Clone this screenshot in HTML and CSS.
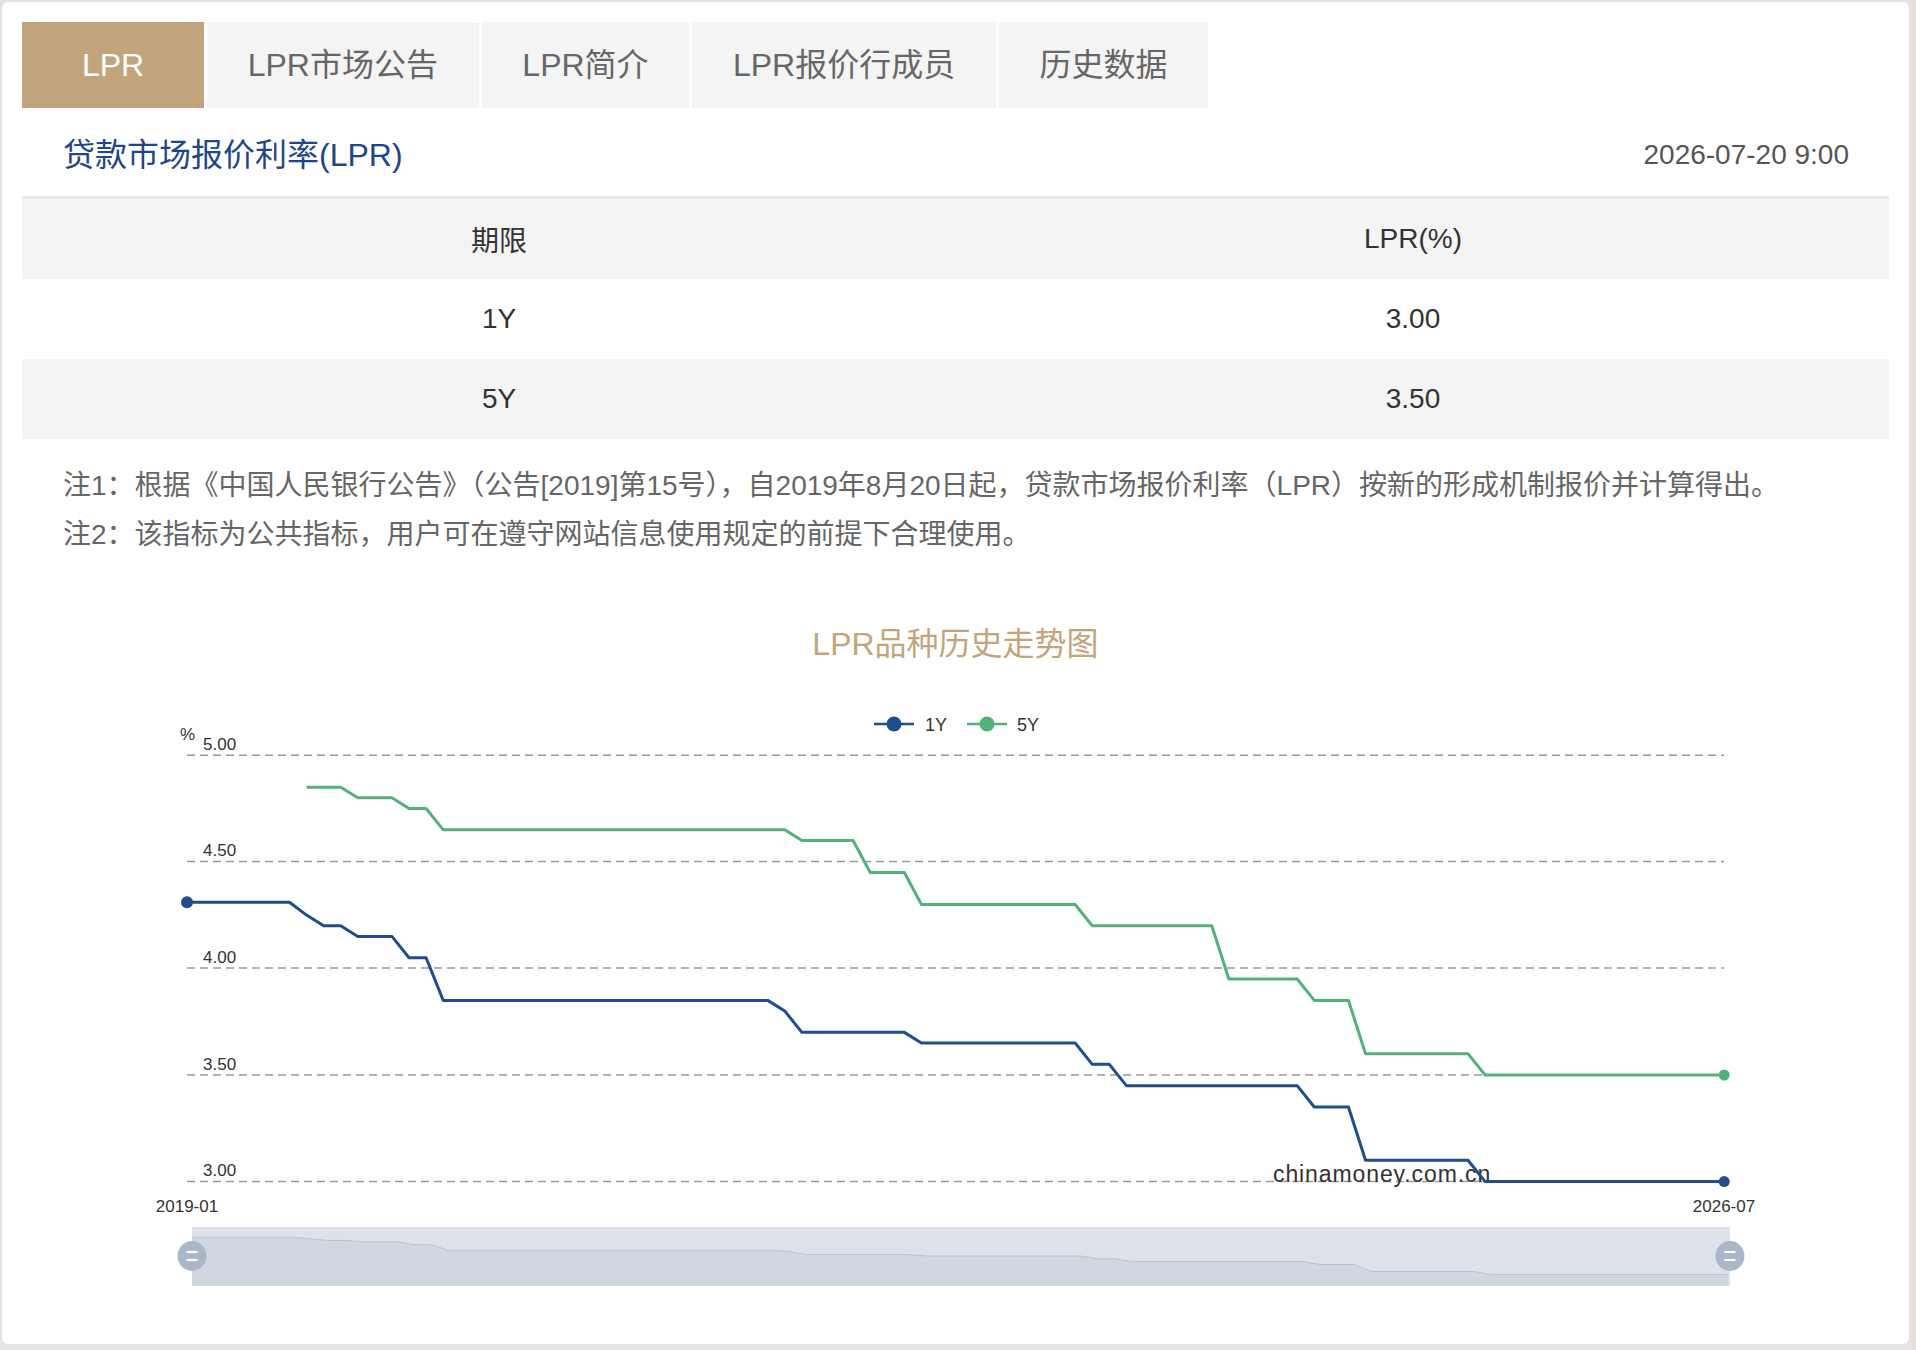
FILE: index.html
```html
<!DOCTYPE html>
<html lang="zh-CN">
<head>
<meta charset="utf-8">
<title>LPR</title>
<link rel="stylesheet" href="styles.css">
</head>
<body>
<div class="card">
  <div class="tabs">
    <div class="tab tab-active tab-first">LPR</div>
    <div class="tab">LPR市场公告</div>
    <div class="tab">LPR简介</div>
    <div class="tab">LPR报价行成员</div>
    <div class="tab">历史数据</div>
  </div>
  <div class="head">
    <div class="head-title">贷款市场报价利率(LPR)</div>
    <div class="head-date">2026-07-20 9:00</div>
  </div>
  <div class="table">
    <div class="row row-gray"><div>期限</div><div>LPR(%)</div></div>
    <div class="row"><div>1Y</div><div>3.00</div></div>
    <div class="row row-gray"><div>5Y</div><div>3.50</div></div>
  </div>
  <div class="notes">
    <p>注1：根据《中国人民银行公告》（公告[2019]第15号），自2019年8月20日起，贷款市场报价利率（LPR）按新的形成机制报价并计算得出。</p>
    <p>注2：该指标为公共指标，用户可在遵守网站信息使用规定的前提下合理使用。</p>
  </div>
  <div class="chart-title">LPR品种历史走势图</div>
  <svg class="chart" width="1867" height="630" viewBox="22 700 1867 630" xmlns="http://www.w3.org/2000/svg">
    <!-- legend -->
    <line x1="874" y1="724" x2="914" y2="724" stroke="#1f4e8c" stroke-width="2.5"/>
    <circle cx="894" cy="724" r="7.5" fill="#1f4e8c"/>
    <text class="legend-text" x="925" y="730.5">1Y</text>
    <line x1="967" y1="724" x2="1007" y2="724" stroke="#53b27b" stroke-width="2.5"/>
    <circle cx="987" cy="724" r="7.5" fill="#53b27b"/>
    <text class="legend-text" x="1017" y="730.5">5Y</text>

    <!-- grid -->
    <g stroke="#9a9a9a" stroke-width="1.5" stroke-dasharray="8 5">
      <line x1="187" y1="755.2" x2="1724" y2="755.2"/>
      <line x1="187" y1="861.6" x2="1724" y2="861.6"/>
      <line x1="187" y1="968" x2="1724" y2="968"/>
      <line x1="187" y1="1075" x2="1724" y2="1075"/>
      <line x1="187" y1="1181.6" x2="1724" y2="1181.6"/>
    </g>
    <text class="axis-text" x="180" y="740">%</text>
    <text class="axis-text" x="203" y="750">5.00</text>
    <text class="axis-text" x="203" y="856">4.50</text>
    <text class="axis-text" x="203" y="962.5">4.00</text>
    <text class="axis-text" x="203" y="1069.5">3.50</text>
    <text class="axis-text" x="203" y="1176">3.00</text>
    <text class="axis-text" x="187" y="1212" text-anchor="middle">2019-01</text>
    <text class="axis-text" x="1724" y="1212" text-anchor="middle">2026-07</text>

    <text class="watermark" x="1273" y="1182">chinamoney.com.cn</text>

    <!-- 5Y -->
    <polyline fill="none" stroke="#53b27b" stroke-width="3" stroke-linejoin="round"
      points="306.56,787.18 340.72,787.18 357.8,797.84 391.96,797.84 409.04,808.5 426.12,808.5 443.2,829.82 784.8,829.82 801.88,840.48 853.12,840.48 870.2,872.46 904.36,872.46 921.44,904.44 1075.16,904.44 1092.24,925.76 1211.8,925.76 1228.88,979.06 1297.2,979.06 1314.28,1000.38 1348.44,1000.38 1365.52,1053.68 1468,1053.68 1485.08,1075 1724.2,1075"/>
    <circle cx="1724.2" cy="1075" r="5.5" fill="#53b27b"/>

    <!-- 1Y -->
    <polyline fill="none" stroke="#1f4e8c" stroke-width="3" stroke-linejoin="round"
      points="187,902.3 289.48,902.3 306.56,915.1 323.64,925.76 340.72,925.76 357.8,936.42 391.96,936.42 409.04,957.74 426.12,957.74 443.2,1000.38 767.72,1000.38 784.8,1011.04 801.88,1032.36 904.36,1032.36 921.44,1043.02 1075.16,1043.02 1092.24,1064.34 1109.32,1064.34 1126.4,1085.66 1297.2,1085.66 1314.28,1106.98 1348.44,1106.98 1365.52,1160.28 1468,1160.28 1485.08,1181.6 1724.2,1181.6"/>
    <circle cx="187" cy="902.3" r="6" fill="#1f4e8c"/>
    <circle cx="1724.2" cy="1181.6" r="5.5" fill="#1f4e8c"/>

    <!-- data zoom slider -->
    <rect x="192" y="1227" width="1538" height="59" fill="#dde1e9"/>
    <path fill="#d1d7e0" d="M192,1286 L192,1237.3 294.5,1237.3 311.6,1239 328.7,1240.4 345.8,1240.4 362.9,1241.8 397.1,1241.8 414.2,1244.7 431.3,1244.7 448.4,1250.3 773.1,1250.3 790.2,1251.7 807.2,1254.6 909.8,1254.6 926.9,1256 1080.7,1256 1097.8,1258.8 1114.9,1258.8 1132,1261.6 1302.9,1261.6 1320,1264.5 1354.1,1264.5 1371.2,1271.5 1473.8,1271.5 1490.8,1274.4 1728,1274.4 L1728,1286 Z"/>
    <polyline fill="none" stroke="#bac2ce" stroke-width="1"
      points="192,1237.3 294.5,1237.3 311.6,1239 328.7,1240.4 345.8,1240.4 362.9,1241.8 397.1,1241.8 414.2,1244.7 431.3,1244.7 448.4,1250.3 773.1,1250.3 790.2,1251.7 807.2,1254.6 909.8,1254.6 926.9,1256 1080.7,1256 1097.8,1258.8 1114.9,1258.8 1132,1261.6 1302.9,1261.6 1320,1264.5 1354.1,1264.5 1371.2,1271.5 1473.8,1271.5 1490.8,1274.4 1728,1274.4"/>
    <ellipse cx="192" cy="1256" rx="14.5" ry="15" fill="#aab6c9"/>
    <line x1="186.5" y1="1252" x2="197.5" y2="1252" stroke="#ffffff" stroke-width="2"/>
    <line x1="186.5" y1="1260" x2="197.5" y2="1260" stroke="#ffffff" stroke-width="2"/>
    <ellipse cx="1730" cy="1256" rx="14.5" ry="15" fill="#aab6c9"/>
    <line x1="1724.5" y1="1252" x2="1735.5" y2="1252" stroke="#ffffff" stroke-width="2"/>
    <line x1="1724.5" y1="1260" x2="1735.5" y2="1260" stroke="#ffffff" stroke-width="2"/>
  </svg>
</div>
</body>
</html>
```
FILE: styles.css
```css
* { box-sizing: border-box; }
html, body { margin: 0; padding: 0; }
body {
  background: linear-gradient(to right, #e3e3e3 1912px, #eadfcc 1912px);
  font-family: "Liberation Sans", "Noto Sans CJK SC", sans-serif;
  min-height: 1350px;
}
.card {
  margin: 2px 0 0 2px;
  width: 1907px;
  background: #ffffff;
  border-radius: 6px;
  padding: 20px 20px 14px 20px;
}
.tabs {
  display: flex;
  gap: 3px;
  height: 86px;
}
.tab {
  background: #f4f4f4;
  color: #666666;
  font-size: 32px;
  line-height: 86px;
  padding: 0 40.7px;
  white-space: nowrap;
  text-align: center;
}
.tab-first { width: 182px; padding: 0; }
.tab-active { background: #c2a47c; color: #ffffff; }
.head {
  height: 91px;
  display: flex;
  align-items: center;
  justify-content: space-between;
  padding: 5px 40px 0 41px;
  border-bottom: 3px solid #e9e9e9;
}
.head-title {
  color: #1f4788;
  font-size: 32px;
  line-height: 40px;
}
.head-date {
  color: #555555;
  font-size: 28px;
  line-height: 40px;
}
.table { display: flex; flex-direction: column; }
.row {
  display: grid;
  grid-template-columns: 954px 874px;
  height: 80px;
  align-items: center;
  text-align: center;
  font-size: 28px;
  color: #333333;
}
.row-gray { background: #f4f4f4; }
.notes {
  margin-top: 22px;
  padding-left: 41px;
  color: #666666;
  font-size: 28px;
  line-height: 49px;
}
.notes p { margin: 0; white-space: nowrap; }
.chart-title {
  margin-top: 65px;
  text-align: center;
  color: #c4a57b;
  font-size: 32px;
  line-height: 40px;
}
.chart { display: block; margin-top: 36px; }
.legend-text { font-family: "Liberation Sans", sans-serif; font-size: 18px; fill: #333333; }
.axis-text { font-family: "Liberation Sans", sans-serif; font-size: 17px; fill: #333333; }
.watermark { font-family: "Liberation Sans", sans-serif; font-size: 23px; letter-spacing: 0.9px; fill: #333333; }
```
